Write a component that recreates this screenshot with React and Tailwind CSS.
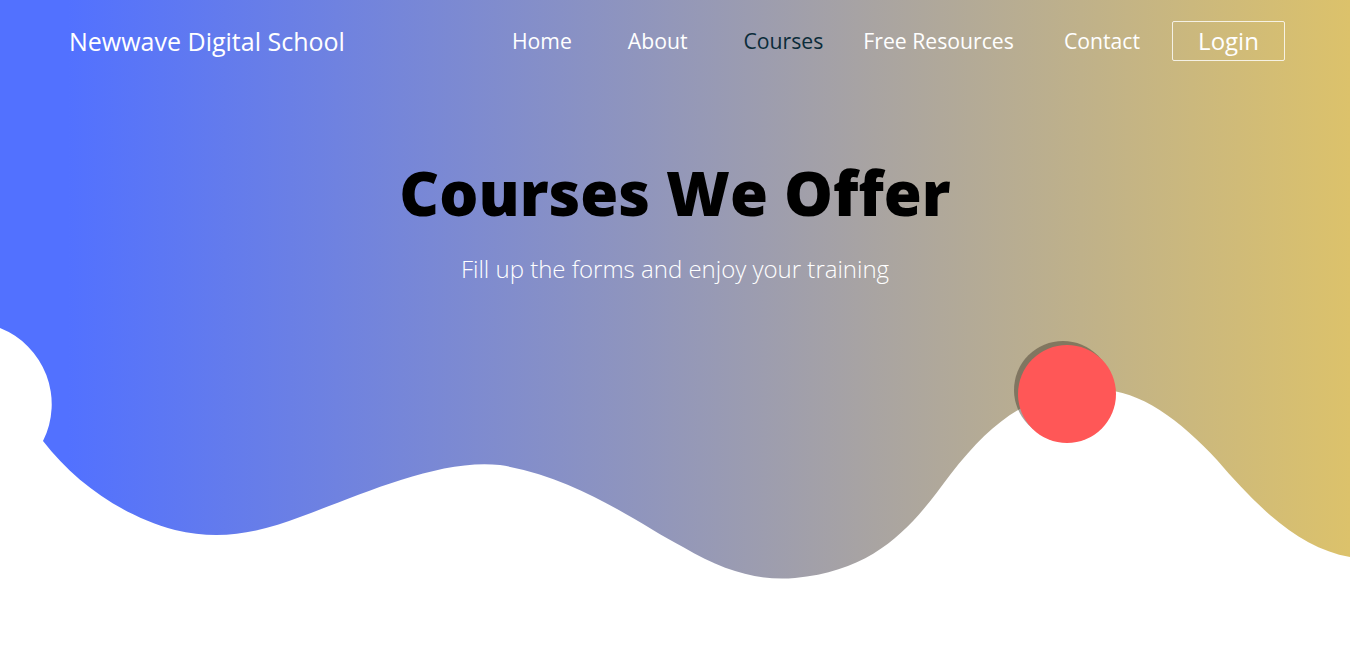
import React from 'react';

const navLinks = [
  { label: 'Home', cls: 'ml-0' },
  { label: 'About', cls: 'ml-[56px]' },
  { label: 'Courses', cls: 'ml-[56px] text-[#0b2c3a]', active: true },
  { label: 'Free Resources', cls: 'ml-[40px]' },
  { label: 'Contact', cls: 'ml-[50px]' },
];

const HeroWave = () => (
  <svg
    className="absolute inset-0 w-full h-full"
    viewBox="0 0 1350 650"
    preserveAspectRatio="none"
  >
    <defs>
      <linearGradient id="heroGrad" x1="0" y1="0" x2="1350" y2="0" gradientUnits="userSpaceOnUse">
        <stop offset="0.05" stopColor="#5271ff" />
        <stop offset="1" stopColor="#dcc26b" />
      </linearGradient>
    </defs>
    <path
      fill="url(#heroGrad)"
      d="M0,0 H1350 V557
         C1300,548 1260,510 1217,460
         C1180,420 1140,390 1100,390
         C1040,390 1000,410 950,475
         C915,522 880,570 795,578
         C760,581 725,572 683,547
         C640,525 580,478 500,465
         C440,458 360,495 300,517
         C265,530 225,542 175,530
         C120,515 75,482 43,441
         A82,82 0 0 0 0,328 Z"
    />
  </svg>
);

const App = () => {
  return (
    <div className="relative w-full h-[650px] bg-white overflow-hidden font-['Open_Sans',sans-serif]">
      <HeroWave />

      {/* red dot */}
      <div className="absolute left-[1018px] top-[345px] w-[98px] h-[98px] rounded-full bg-[#ff5757] shadow-[-4px_-4px_0_rgba(60,50,40,0.45)]" />

      <div className="relative">
        <nav className="flex items-center h-[82px] pl-[69px] pr-[65px]">
          <div className="text-white text-[25px] leading-none">Newwave Digital School</div>
          <div className="ml-auto flex items-center">
            {navLinks.map((link) => (
              <a
                key={link.label}
                href="#"
                className={`text-[21.2px] leading-none ${link.active ? '' : 'text-white'} ${link.cls}`}
              >
                {link.label}
              </a>
            ))}
            <button className="ml-[32px] w-[113px] h-[40px] border border-white/80 rounded-[2px] text-white text-[24px] leading-none">
              Login
            </button>
          </div>
        </nav>

        <div className="flex flex-col items-center pt-[80px]">
          <h1 className="text-[61.5px] font-extrabold text-black leading-none">Courses We Offer</h1>
          <p className="mt-[33px] text-[24px] font-light text-white leading-none">
            Fill up the forms and enjoy your training
          </p>
        </div>
      </div>
    </div>
  );
};

export default App;
